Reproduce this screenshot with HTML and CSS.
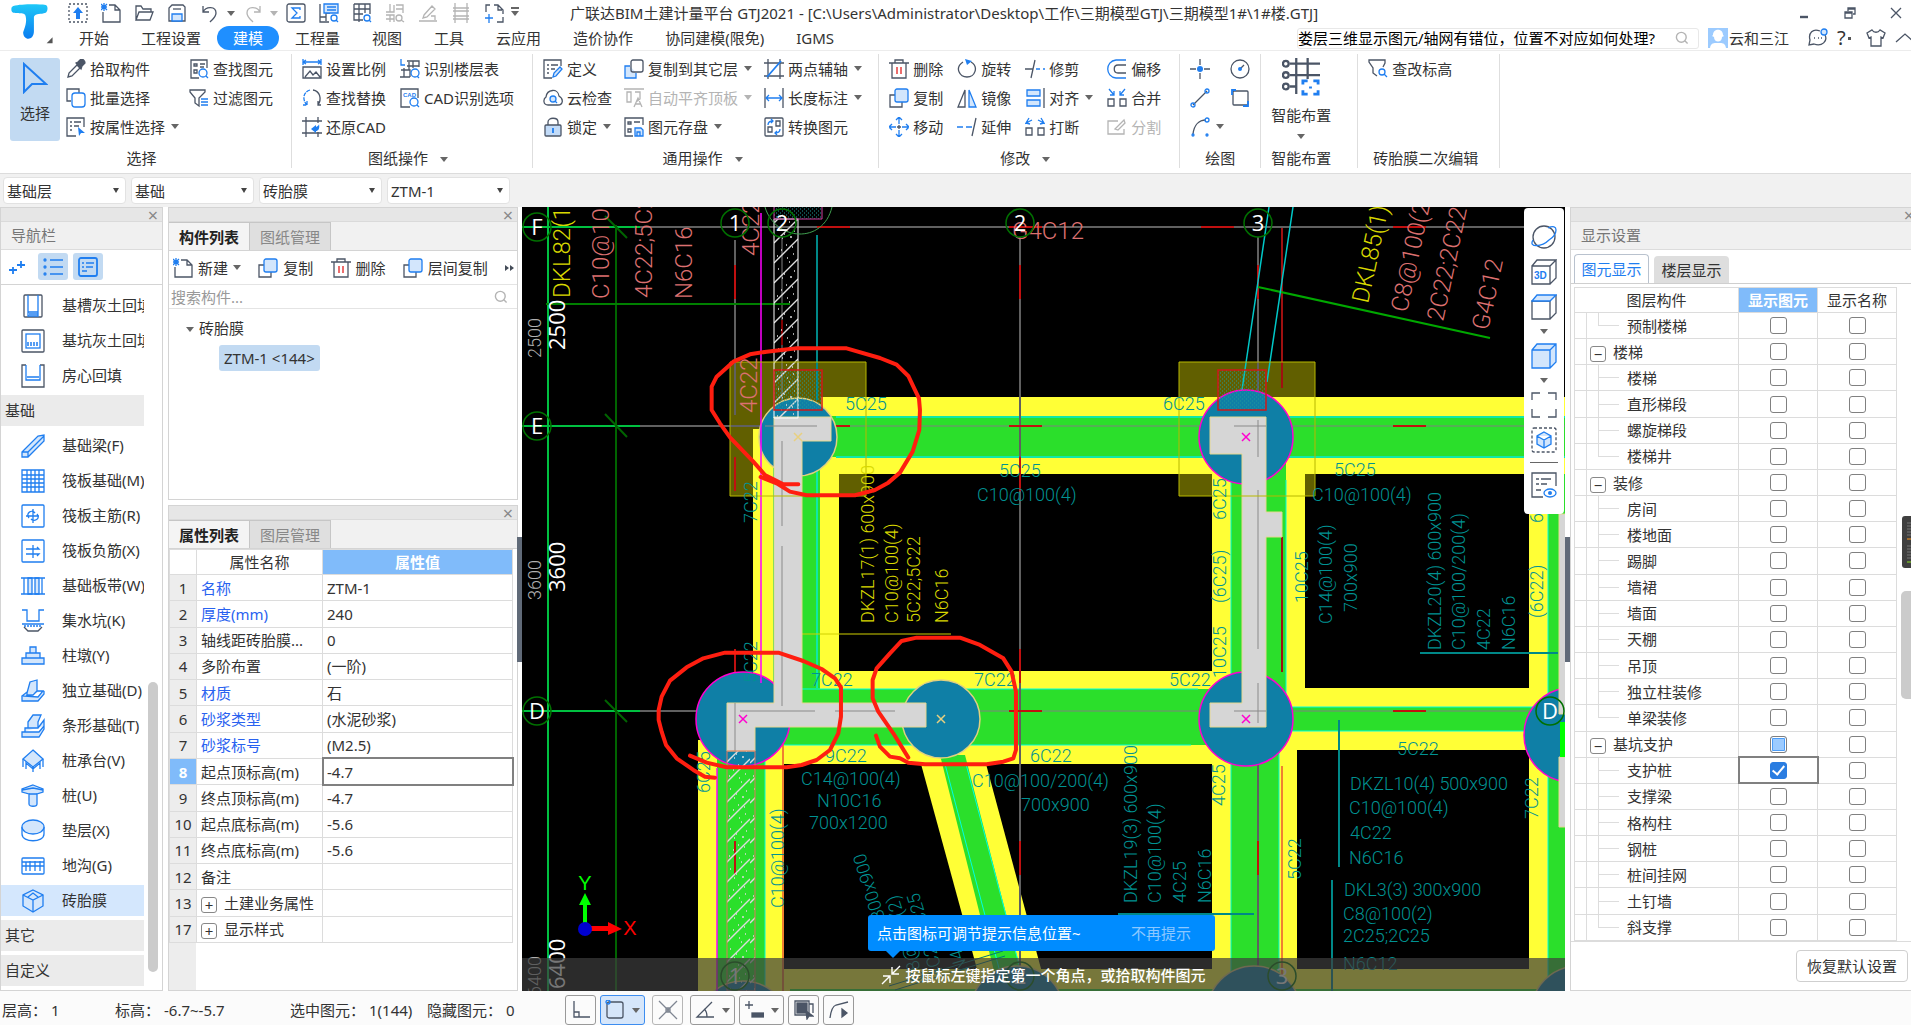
FILE: index.html
```
<!DOCTYPE html>
<html lang="zh-CN">
<head>
	<meta charset="UTF-8">
	<meta name="viewport" content="width=device-width, initial-scale=1">
	<title>广联达BIM土建计量平台 GTJ2021</title>
	<link rel="stylesheet" href="styles.css">
</head>
<body>
	<!-- icon sprite -->
	<svg class="sprite" aria-hidden="true">
		<symbol id="i-up" viewBox="0 0 20 20"><rect x="1" y="1" width="18" height="18" stroke-dasharray="2 2"/><path class="solid" d="M10 4l5 6h-3v6H8v-6H5z"/></symbol>
		<symbol id="i-new" viewBox="0 0 20 20"><path d="M8 2h6l5 5v12H2V9M14 2v5h5"/><path class="b" d="M0 1l6 6M6 1L0 7M3 0v8M0 4h6"/></symbol>
		<symbol id="i-open" viewBox="0 0 20 20"><path d="M2 17V3h5l2 3h8v3M2 17L5 9h14l-3 8z"/></symbol>
		<symbol id="i-save" viewBox="0 0 20 20"><path d="M2 18V5l3-3h11l2 2v14z"/><path class="bf" d="M5 18v-7h10v7z"/><path d="M6 6h8"/></symbol>
		<symbol id="i-undo" viewBox="0 0 20 20"><path d="M3 3v6h6M3 9c3-6 13-6 13 1 0 4-3 6-6 9"/></symbol>
		<symbol id="i-redo" viewBox="0 0 20 20"><path class="g" d="M17 3v6h-6M17 9C14 3 4 3 4 10c0 4 3 6 6 9"/></symbol>
		<symbol id="i-sum" viewBox="0 0 20 20"><rect x="1" y="1" width="18" height="18" rx="2"/><path class="b" d="M14 7V5H6l5 5-5 5h8v-2"/></symbol>
		<symbol id="i-find" viewBox="0 0 20 20"><path d="M1 1v18h9M1 14h6v4M7 14v-4h4"/><path class="bf" d="M5 1h14v9H5z"/><path class="b" d="M8 4h9M8 7h9M17 17l2 2"/><circle class="b" cx="15" cy="15" r="3"/></symbol>
		<symbol id="i-grid" viewBox="0 0 20 20"><path d="M2 1h16v10M2 1v16h9M2 6h16M2 11h9M7 1v18M13 1v9"/><circle class="b" cx="15" cy="15" r="3"/><path class="b" d="M17 17l2 2"/></symbol>
		<symbol id="i-gfind" viewBox="0 0 20 20"><path class="g" d="M1 9h8V2M5 1v8M11 2h7v8M11 6h7M1 12h8v7M5 12v7M1 16h8"/><circle class="g" cx="14" cy="15" r="3"/><path class="g" d="M16 17l3 2"/></symbol>
		<symbol id="i-pen" viewBox="0 0 20 20"><path class="g" d="M6 12l8-9 3 3-8 8-4 1zM1 18h18M13 13h4v4"/></symbol>
		<symbol id="i-ladder" viewBox="0 0 20 20"><path class="g" d="M4 0v20M16 0v20M2 5h16M2 8h16M2 13h16M2 16h16"/></symbol>
		<symbol id="i-page" viewBox="0 0 20 20"><path d="M2 9V2h4M10 2h4l5 5v4M19 14v5h-6M14 2v5h4"/><path class="b" d="M5 11v9M1 15h8"/></symbol>
		<symbol id="i-pick" viewBox="0 0 20 20"><path d="M2 18l1-4 8-8 3 3-8 8z"/><path class="dark" d="M10 4l2-1 3-3c2 0 4 2 4 4l-3 3-1 3z"/></symbol>
		<symbol id="i-batch" viewBox="0 0 20 20"><path d="M5 13H1V1h12v4"/><rect class="b" x="6" y="5" width="13" height="14" rx="3"/></symbol>
		<symbol id="i-prop" viewBox="0 0 20 20"><path d="M10 19H1V1h17v9M4 5h2M8 5h7M4 9h2M8 9h5M4 13h2"/><path class="solid" d="M12 10l7 6-4 0-2 3z"/></symbol>
		<symbol id="i-findel" viewBox="0 0 20 20"><path d="M10 19H2V1h16v8M5 5h3v2H5zM5 11h3v3H5zM11 5h5M11 8h4"/><circle class="b" cx="14" cy="14" r="4"/><path class="b" d="M17 17l2 2"/></symbol>
		<symbol id="i-filter" viewBox="0 0 20 20"><path d="M1 2h15v2l-6 6v8l-4-3v-5L1 4z"/><path class="b" d="M12 11h7M12 14h7M12 17h7"/></symbol>
		<symbol id="i-scale" viewBox="0 0 20 20"><path class="b" d="M1 3h18M1 0v6M19 0v6M16 1l3 2-3 2M4 1L1 3l3 2"/><path d="M1 8h18v11H1zM3 18l5-6 3 4 3-3 4 5"/></symbol>
		<symbol id="i-floor" viewBox="0 0 20 20"><path class="b" d="M1 0v6h4"/><path d="M7 2h12v6M13 2v7M7 7h12M1 11h9v7M4 9v9M0 18h10M9 3v8"/><circle class="b" cx="15" cy="14" r="4"/><path class="b" d="M17 17l2 2"/></symbol>
		<symbol id="i-swap" viewBox="0 0 20 20"><path class="b" d="M8 2C1 4 0 12 5 17M5 13v4H1" stroke-dasharray="4 1"/><path d="M11 2c7 1 9 9 5 15M16 13v4h3"/></symbol>
		<symbol id="i-cad" viewBox="0 0 20 20"><path d="M10 19H1V1h17v9"/><text class="tiny" x="3" y="9">CAD</text><circle class="b" cx="14" cy="14" r="4"/><path class="b" d="M17 17l2 2"/></symbol>
		<symbol id="i-restore" viewBox="0 0 20 20"><path d="M0 4h20M4 0v20M0 16h20M16 0v6M16 15v5"/><path class="solid" d="M9 12l5-4v2c3-1 3-3 3-3 1 5-1 7-3 7v2z"/></symbol>
		<symbol id="i-def" viewBox="0 0 20 20"><path d="M9 19H1V1h17v6M4 6h2M8 6h7M4 10h2M8 10h4M4 14h2"/><path class="bf" d="M10 18l1-4 6-6 2 2-6 7z"/></symbol>
		<symbol id="i-cloud" viewBox="0 0 20 20"><path d="M5 17c-5 0-5-6-2-8C4 1 15 0 16 8c5 3 4 9-1 9z"/><circle class="bf" cx="10" cy="11" r="3"/><path class="b" d="M12 13l2 2"/></symbol>
		<symbol id="i-lock" viewBox="0 0 20 20"><path d="M5 8V5c0-5 10-5 10 0v3"/><rect class="lf" x="2" y="8" width="16" height="11" rx="1"/><path class="b2" d="M10 11v5"/></symbol>
		<symbol id="i-copyto" viewBox="0 0 20 20"><path class="bf" d="M6 7H1v12h11v-5"/><rect x="7" y="1" width="12" height="12" rx="2"/></symbol>
		<symbol id="i-align" viewBox="0 0 20 20"><path class="g" d="M0 1h20M3 4h4v10H3zM11 4h5v7l-4 3M10 19l4-9 4 9M11 16h6"/></symbol>
		<symbol id="i-disk" viewBox="0 0 20 20"><path d="M9 19H1V1h18v7M4 5h3v2H4zM4 12h3v3H4zM10 5h6"/><path class="bf" d="M11 11h6l2 2v6h-8z"/><path class="b" d="M13 19v-4h3v4"/></symbol>
		<symbol id="i-two" viewBox="0 0 20 20"><path d="M0 4h20M4 0v20M0 17h20M16 0v20"/><path class="b2" d="M3 18L17 2"/></symbol>
		<symbol id="i-len" viewBox="0 0 20 20"><path d="M1 0v20M19 0v20"/><path class="b" d="M2 10h16M5 7l-3 3 3 3M15 7l3 3-3 3"/></symbol>
		<symbol id="i-conv" viewBox="0 0 20 20"><rect x="1" y="1" width="18" height="18" rx="1"/><path d="M4 10h4v5H4zM12 4h4v5h-4z"/><path class="b" d="M4 8c0-3 2-4 5-4M7 2l2 2-2 2M16 12c0 3-2 4-5 4M13 14l-2 2 2 2"/></symbol>
		<symbol id="i-del" viewBox="0 0 20 20"><path d="M0 4h20M6 4V1h8v3M3 4v15h14V4"/><path class="r" d="M8 8v7M12 8v7"/></symbol>
		<symbol id="i-copy" viewBox="0 0 20 20"><path d="M7 7H1v12h12v-5"/><rect class="bf" x="6" y="1" width="13" height="13" rx="2"/></symbol>
		<symbol id="i-move" viewBox="0 0 20 20"><path class="b" d="M10 7V1M7 3l3-3 3 3M10 13v6M7 17l3 3 3-3M7 10H1M3 7l-3 3 3 3M13 10h6M17 7l3 3-3 3"/><path d="M10 8v4M8 10h4"/></symbol>
		<symbol id="i-rot" viewBox="0 0 20 20"><path d="M6 3c-9 6-3 15 4 15 8 0 12-10 4-15"/><path class="solid" d="M8 0l7 2-5 4z"/></symbol>
		<symbol id="i-mir" viewBox="0 0 20 20"><path d="M8 2v17H1z"/><path class="bf" d="M12 2v17h7z"/></symbol>
		<symbol id="i-ext" viewBox="0 0 20 20"><path d="M19 1l-4 18"/><path class="b" d="M0 10h6M9 10h6"/></symbol>
		<symbol id="i-trim" viewBox="0 0 20 20"><path d="M10 1L6 19M0 10h8"/><path class="b" d="M11 10h4M18 10h2"/></symbol>
		<symbol id="i-al" viewBox="0 0 20 20"><path d="M19 0v20"/><path class="bf" d="M2 2h13v6H2zM2 12h13v6H2z"/></symbol>
		<symbol id="i-brk" viewBox="0 0 20 20"><path d="M1 11h6v7H1zM13 11h6v7h-6z"/><path class="b" d="M7 3L1 6l3-5M1 6l4 1M13 3l6 3-3-5M19 6l-4 1"/></symbol>
		<symbol id="i-off" viewBox="0 0 20 20"><path class="b" d="M19 1H9C-2 2-2 18 9 19h10"/><path d="M19 6h-8c-5 0-5 8 0 8h8"/></symbol>
		<symbol id="i-merge" viewBox="0 0 20 20"><path d="M1 11h6v7H1zM13 11h6v7h-6z"/><path class="b" d="M2 1l5 6M7 3v4H3M18 1l-5 6M13 3v4h4"/></symbol>
		<symbol id="i-split" viewBox="0 0 20 20"><path class="g" d="M11 4H1v13h16v-5M8 12l9-9 1 3-7 7z"/></symbol>
		<symbol id="i-pt" viewBox="0 0 20 20"><path d="M10 0v6M10 14v6M0 10h6M14 10h6"/><circle class="solid" cx="10" cy="10" r="3"/></symbol>
		<symbol id="i-cir" viewBox="0 0 20 20"><circle cx="10" cy="10" r="9"/><path d="M10 10l4-4"/><circle class="solid" cx="10" cy="10" r="2"/></symbol>
		<symbol id="i-line" viewBox="0 0 20 20"><path d="M3 17L17 3"/><circle class="b" cx="3" cy="17" r="2"/><circle class="b" cx="17" cy="3" r="2"/></symbol>
		<symbol id="i-rect" viewBox="0 0 20 20"><rect x="3" y="3" width="15" height="14" rx="1"/><path class="b2" d="M2 7V2h4M13 18h5v-5"/></symbol>
		<symbol id="i-arc" viewBox="0 0 20 20"><path d="M3 17C4 8 9 3 16 3"/><circle class="b" cx="3" cy="18" r="1"/><circle class="b" cx="17" cy="3" r="2"/><circle class="b" cx="17" cy="18" r="1"/></symbol>
		<symbol id="i-smart" viewBox="0 0 40 40"><path class="d2" d="M8 6h32M8 18h32M8 30h7M15 0v38M27 0v22"/><circle class="d2" cx="4" cy="6" r="3"/><circle class="d2" cx="4" cy="18" r="3"/><circle class="d2" cx="4" cy="30" r="3"/><path class="b3" d="M22 28v-4h5M33 24h5v4M38 34v4h-5M27 38h-5v-4M30 30v2"/></symbol>
		<symbol id="i-fh" viewBox="0 0 20 20"><path d="M9 17l-4-3V9L1 3V1h16v3l-2 4"/><circle class="b" cx="14" cy="13" r="3"/><path class="b" d="M16 15l3 3"/></symbol>
		<symbol id="i-mag" viewBox="0 0 20 20"><circle class="g" cx="9" cy="9" r="7"/><path class="g" d="M14 14l4 4"/></symbol>
		<!-- component icons -->
		<symbol id="n-slot" viewBox="0 0 24 24"><rect x="3" y="1" width="18" height="22" rx="1"/><path class="b" d="M7 1v21h10V1M7 18h10M8 20h9" /></symbol>
		<symbol id="n-pit" viewBox="0 0 24 24"><rect x="1" y="1" width="22" height="22" rx="1"/><rect class="b" x="5" y="5" width="14" height="14"/><path class="b" d="M6 14h12M6 16h12" stroke-dasharray="2 1"/></symbol>
		<symbol id="n-room" viewBox="0 0 24 24"><path d="M5 1H1v22h22V1h-4"/><path class="b" d="M5 1v15h14V1M6 13h12" /></symbol>
		<symbol id="n-beam" viewBox="0 0 24 24"><path class="bf" d="M1 18L17 2l6-1v6L7 23H1zM1 18h6v5M7 18L23 2"/></symbol>
		<symbol id="n-raft" viewBox="0 0 24 24"><path class="b" d="M1 1h22v22H1zM1 6h22M1 10h22M1 14h22M1 18h22M6 1v22M10 1v22M14 1v22M18 1v22"/></symbol>
		<symbol id="n-main" viewBox="0 0 24 24"><rect class="b" x="1" y="1" width="22" height="22" rx="1"/><path class="b" d="M5 12h13M12 5v14M8 14c-4-5 3-9 6-5M16 10c4 5-3 8-6 5"/></symbol>
		<symbol id="n-neg" viewBox="0 0 24 24"><rect class="b" x="1" y="1" width="22" height="22" rx="1"/><path class="b" d="M5 10h13l-2-2M5 15h13l-2 2M12 6v13"/></symbol>
		<symbol id="n-strip" viewBox="0 0 24 24"><path class="bf" d="M7 4h4v16H7zM14 4h4v16h-4z"/><path class="b" d="M0 4h24M0 20h24M3 4v16M21 4v16"/></symbol>
		<symbol id="n-sump" viewBox="0 0 24 24"><path class="b" d="M1 1h5v11h12V1h5M1 15h22" /><path class="b" d="M3 17h18" stroke-dasharray="2 1"/><path d="M3 18l4 4h10l4-4"/></symbol>
		<symbol id="n-pier" viewBox="0 0 24 24"><path class="bf" d="M9 3h6v6H9zM5 9h14v5H5zM1 14h22v6H1z"/></symbol>
		<symbol id="n-iso" viewBox="0 0 24 24"><path class="bf" d="M6 14L9 3l7-2v11l-4 4H6zM1 17l5-4v3h6l4-4h6l-5 6zM1 17v5h16l6-7v-3"/></symbol>
		<symbol id="n-stripf" viewBox="0 0 24 24"><path class="bf" d="M7 8l5-7h8l-3 7v6H7zM4 14h13l6-8v9l-5 8H1v-5h3zM1 18h17l5-6"/></symbol>
		<symbol id="n-cap" viewBox="0 0 24 24"><path class="bf" d="M12 1l10 9-10 8L2 10z"/><path class="b" d="M2 10v8M22 10v8M12 18v5M5 20v-6l7 6 7-6v6"/></symbol>
		<symbol id="n-pile" viewBox="0 0 24 24"><path class="bf" d="M12 1l10 4v3l-6 2v10c0 3-8 3-8 0V10L1 8V5z"/><path class="b" d="M1 6l11-2 10 2M8 10h8"/></symbol>
		<symbol id="n-cush" viewBox="0 0 24 24"><path class="b" d="M1 8v7c0 9 22 9 22 0V8"/><ellipse class="bf" cx="12" cy="8" rx="11" ry="7"/></symbol>
		<symbol id="n-ditch" viewBox="0 0 24 24"><rect class="b" x="1" y="4" width="22" height="16" rx="1"/><path class="b" d="M1 12h22M5 8v9M9 7v10M14 7v10M19 7v10M1 8h22"/></symbol>
		<symbol id="n-mold" viewBox="0 0 24 24"><path class="bf" d="M12 1l10 5v11l-10 6-10-6V6z"/><path class="b" d="M2 6l10 5 10-5M12 11v12M7 8l5-4 5 4"/></symbol>
		<symbol id="v-orbit" viewBox="0 0 26 26"><circle cx="13" cy="13" r="11"/><path class="b" d="M2 16c-5 8 9 7 16 0C27 10 28-1 17 4"/></symbol>
		<symbol id="v-cube" viewBox="0 0 26 26"><path d="M1 7h18v18H1zM1 7l5-6h19l-6 6M25 1v18l-6 6"/></symbol>
		<symbol id="v-top" viewBox="0 0 26 26"><path d="M1 7h18v18H1zM25 1v18l-6 6"/><path class="bf" d="M1 7l5-6h19l-6 6z"/></symbol>
		<symbol id="v-solid" viewBox="0 0 26 26"><path class="bf" d="M1 7l5-6h19v18l-6 6H1zM1 7h18v18M19 7l6-6"/></symbol>
		<symbol id="v-full" viewBox="0 0 26 26"><path d="M1 8V1h8M17 1h8v7M25 17v8h-8M9 25H1v-8"/></symbol>
		<symbol id="v-box" viewBox="0 0 26 26"><rect x="1" y="1" width="24" height="24" rx="2" stroke-dasharray="3 2"/><path class="bf" d="M13 5l7 4v8l-7 4-7-4V9zM6 9l7 4 7-4M13 13v8"/></symbol>
		<symbol id="v-list" viewBox="0 0 26 26"><path d="M12 25H1V1h24v13M5 7h3M10 7h10M5 12h3M10 12h6M5 18h5"/><ellipse class="b" cx="19" cy="21" rx="6" ry="4"/><circle class="solid" cx="19" cy="21" r="2"/></symbol>
	</svg>

	<header class="top">
		<div class="logo">
			<svg viewBox="0 0 60 51">
				<defs><linearGradient id="lg" x1="0" y1="0" x2="0" y2="1"><stop offset="0" stop-color="#1ec8f8"/><stop offset="1" stop-color="#0a7cf0"/></linearGradient></defs>
				<path fill="url(#lg)" d="M13 6c8-2 25-2 33-1 3 1 2 7 0 8-5 2-10 0-12 4v15c0 10-11 10-11 1 3-8 4-13 2-18-3-3-14 1-14-5 0-2 0-3 2-4z"/>
				<path fill="#555" d="M53 38v6h-6z"/>
			</svg>
		</div>
		<div class="top-main">
			<div class="titlebar">
				<div class="quick">
					<button aria-label="升级"><svg class="ic"><use href="#i-up"/></svg></button>
					<button aria-label="新建工程"><svg class="ic"><use href="#i-new"/></svg></button>
					<button aria-label="打开"><svg class="ic"><use href="#i-open"/></svg></button>
					<button aria-label="保存"><svg class="ic"><use href="#i-save"/></svg></button>
					<button aria-label="撤销"><svg class="ic"><use href="#i-undo"/></svg></button>
					<button class="drop" aria-label="撤销列表"><i class="tri"></i></button>
					<button aria-label="恢复"><svg class="ic"><use href="#i-redo"/></svg></button>
					<button class="drop" aria-label="恢复列表"><i class="tri dim"></i></button>
					<button aria-label="汇总计算"><svg class="ic"><use href="#i-sum"/></svg></button>
					<button aria-label="查看工程量"><svg class="ic"><use href="#i-find"/></svg></button>
					<button aria-label="查看报表"><svg class="ic"><use href="#i-grid"/></svg></button>
					<button aria-label="查看计算式" disabled><svg class="ic"><use href="#i-gfind"/></svg></button>
					<button aria-label="编辑" disabled><svg class="ic"><use href="#i-pen"/></svg></button>
					<button aria-label="钢筋" disabled><svg class="ic"><use href="#i-ladder"/></svg></button>
					<button aria-label="导出"><svg class="ic"><use href="#i-page"/></svg></button>
					<button class="drop" aria-label="自定义快速访问"><i class="tri bar"></i></button>
				</div>
				<div class="title">广联达BIM土建计量平台 GTJ2021 - [C:\Users\Administrator\Desktop\工作\三期模型GTJ\三期模型1#\1#楼.GTJ]</div>
				<div class="win">
					<button aria-label="最小化"><svg class="ic" viewBox="0 0 20 20"><path class="d2" d="M6 14h8"/></svg></button>
					<button aria-label="还原"><svg class="ic" viewBox="0 0 20 20"><path d="M5 9h7v6H5zM8 8V5h7v6h-2M5 10h7M8 6h7"/></svg></button>
					<button aria-label="关闭"><svg class="ic" viewBox="0 0 20 20"><path d="M5 5l10 10M15 5L5 15"/></svg></button>
				</div>
			</div>
			<div class="menubar">
				<nav class="menu">
					<a href="#">开始</a><a href="#">工程设置</a><a href="#" class="on">建模</a><a href="#">工程量</a><a href="#">视图</a><a href="#">工具</a><a href="#">云应用</a><a href="#">造价协作</a><a href="#">协同建模(限免)</a><a href="#">IGMS</a>
				</nav>
				<div class="help">
					<div class="ask"><input type="text" aria-label="帮助搜索" value="娄层三维显示图元/轴网有错位，位置不对应如何处理?"><svg class="ic small"><use href="#i-mag"/></svg></div>
					<svg class="avatar" viewBox="0 0 20 20"><path fill="#9ccbff" d="M0 0h20v20H0z"/><path fill="#fff" d="M5 7c0-7 10-7 10 0l1 1-2 1c0 6-8 6-8 0L4 8zM2 20c1-6 5-5 8-5s7-1 8 5z"/></svg>
					<a href="#" class="user">云和三江</a>
					<button aria-label="消息"><svg class="ic" viewBox="0 0 20 20"><path d="M12 3C5 0 0 5 2 12l-1 5 5-1c8 3 14-3 11-9M6 10h1M10 10h1M13 10h1"/><circle class="bf" cx="16" cy="4" r="3"/></svg></button>
					<button class="q" aria-label="帮助">?<i class="dot"></i></button>
					<button aria-label="皮肤"><svg class="ic" viewBox="0 0 20 20"><path d="M6 2c2 3 6 3 8 0l5 3-2 5-2-1v9H5V9l-2 1-2-5z"/></svg></button>
					<button aria-label="收起功能区"><svg class="ic" viewBox="0 0 20 20"><path d="M1 14l9-8 9 8"/></svg></button>
				</div>
			</div>
		</div>
	</header>

	<section class="ribbon">
		<div class="group g-select">
			<div class="tools">
				<button class="big on"><svg class="arrow" viewBox="0 0 26 32"><path d="M2 2v28l8-8h14z"/></svg>选择</button>
				<div class="cols">
					<button><svg class="ic"><use href="#i-pick"/></svg>拾取构件</button>
					<button><svg class="ic"><use href="#i-batch"/></svg>批量选择</button>
					<button><svg class="ic"><use href="#i-prop"/></svg>按属性选择<i class="tri"></i></button>
					<button><svg class="ic"><use href="#i-findel"/></svg>查找图元</button>
					<button><svg class="ic"><use href="#i-filter"/></svg>过滤图元</button>
				</div>
			</div>
			<div class="name">选择</div>
		</div>
		<div class="group g-paper">
			<div class="tools"><div class="cols">
				<button><svg class="ic"><use href="#i-scale"/></svg>设置比例</button>
				<button><svg class="ic"><use href="#i-swap"/></svg>查找替换</button>
				<button><svg class="ic"><use href="#i-restore"/></svg>还原CAD</button>
				<button><svg class="ic"><use href="#i-floor"/></svg>识别楼层表</button>
				<button><svg class="ic"><use href="#i-cad"/></svg>CAD识别选项</button>
			</div></div>
			<div class="name">图纸操作<i class="tri"></i></div>
		</div>
		<div class="group g-common">
			<div class="tools"><div class="cols">
				<button><svg class="ic"><use href="#i-def"/></svg>定义</button>
				<button><svg class="ic"><use href="#i-cloud"/></svg>云检查</button>
				<button><svg class="ic"><use href="#i-lock"/></svg>锁定<i class="tri"></i></button>
				<button><svg class="ic"><use href="#i-copyto"/></svg>复制到其它层<i class="tri"></i></button>
				<button disabled><svg class="ic"><use href="#i-align"/></svg>自动平齐顶板<i class="tri dim"></i></button>
				<button><svg class="ic"><use href="#i-disk"/></svg>图元存盘<i class="tri"></i></button>
				<button><svg class="ic"><use href="#i-two"/></svg>两点辅轴<i class="tri"></i></button>
				<button><svg class="ic"><use href="#i-len"/></svg>长度标注<i class="tri"></i></button>
				<button><svg class="ic"><use href="#i-conv"/></svg>转换图元</button>
			</div></div>
			<div class="name">通用操作<i class="tri"></i></div>
		</div>
		<div class="group g-edit">
			<div class="tools"><div class="cols">
				<button><svg class="ic"><use href="#i-del"/></svg>删除</button>
				<button><svg class="ic"><use href="#i-copy"/></svg>复制</button>
				<button><svg class="ic"><use href="#i-move"/></svg>移动</button>
				<button><svg class="ic"><use href="#i-rot"/></svg>旋转</button>
				<button><svg class="ic"><use href="#i-mir"/></svg>镜像</button>
				<button><svg class="ic"><use href="#i-ext"/></svg>延伸</button>
				<button><svg class="ic"><use href="#i-trim"/></svg>修剪</button>
				<button><svg class="ic"><use href="#i-al"/></svg>对齐<i class="tri"></i></button>
				<button><svg class="ic"><use href="#i-brk"/></svg>打断</button>
				<button><svg class="ic"><use href="#i-off"/></svg>偏移</button>
				<button><svg class="ic"><use href="#i-merge"/></svg>合并</button>
				<button disabled><svg class="ic"><use href="#i-split"/></svg>分割</button>
			</div></div>
			<div class="name">修改<i class="tri"></i></div>
		</div>
		<div class="group g-draw">
			<div class="tools"><div class="cols">
				<button aria-label="点"><svg class="ic"><use href="#i-pt"/></svg></button>
				<button aria-label="直线"><svg class="ic"><use href="#i-line"/></svg></button>
				<button aria-label="弧线"><svg class="ic"><use href="#i-arc"/></svg><i class="tri"></i></button>
				<button aria-label="圆"><svg class="ic"><use href="#i-cir"/></svg></button>
				<button aria-label="矩形"><svg class="ic"><use href="#i-rect"/></svg></button>
			</div></div>
			<div class="name">绘图</div>
		</div>
		<div class="group g-smart">
			<div class="tools"><button class="big"><svg class="ic smart"><use href="#i-smart"/></svg>智能布置<i class="tri"></i></button></div>
			<div class="name">智能布置</div>
		</div>
		<div class="group g-second">
			<div class="tools"><div class="cols"><button><svg class="ic"><use href="#i-fh"/></svg>查改标高</button></div></div>
			<div class="name">砖胎膜二次编辑</div>
		</div>
	</section>

	<div class="combos">
		<div class="combo"><select aria-label="楼层"><option>基础层</option></select></div>
		<div class="combo"><select aria-label="分类"><option>基础</option></select></div>
		<div class="combo"><select aria-label="构件类型"><option>砖胎膜</option></select></div>
		<div class="combo"><select aria-label="构件"><option>ZTM-1</option></select></div>
	</div>

	<main class="work">
		<aside class="panel nav">
			<div class="strip"><button aria-label="关闭导航栏"></button></div>
			<h2>导航栏</h2>
			<div class="navtools">
				<button aria-label="添加"><svg class="ic" viewBox="0 0 20 20"><path class="b2" d="M5 10v7M1 13h8M13 4v7M9 8h8"/></svg></button>
				<button class="on" aria-label="列表"><svg class="ic" viewBox="0 0 20 20"><path class="b" d="M7 3h13M7 10h13M7 17h13"/><circle class="b" cx="2" cy="3" r="1"/><circle class="b" cx="2" cy="10" r="1"/><circle class="b" cx="2" cy="17" r="1"/></svg></button>
				<button class="on" aria-label="图标"><svg class="ic" viewBox="0 0 20 20"><rect class="b2" x="1" y="1" width="18" height="18" rx="2"/><path class="b" d="M4 6h2M8 6h8M4 10h2M8 10h7M4 14h5"/></svg></button>
			</div>
			<div class="navbody">
				<ul>
					<li><a href="#"><svg class="ic"><use href="#n-slot"/></svg>基槽灰土回填</a></li>
					<li><a href="#"><svg class="ic"><use href="#n-pit"/></svg>基坑灰土回填</a></li>
					<li><a href="#"><svg class="ic"><use href="#n-room"/></svg>房心回填</a></li>
					<li class="cat">基础</li>
					<li><a href="#"><svg class="ic"><use href="#n-beam"/></svg>基础梁(F)</a></li>
					<li><a href="#"><svg class="ic"><use href="#n-raft"/></svg>筏板基础(M)</a></li>
					<li><a href="#"><svg class="ic"><use href="#n-main"/></svg>筏板主筋(R)</a></li>
					<li><a href="#"><svg class="ic"><use href="#n-neg"/></svg>筏板负筋(X)</a></li>
					<li><a href="#"><svg class="ic"><use href="#n-strip"/></svg>基础板带(W)</a></li>
					<li><a href="#"><svg class="ic"><use href="#n-sump"/></svg>集水坑(K)</a></li>
					<li><a href="#"><svg class="ic"><use href="#n-pier"/></svg>柱墩(Y)</a></li>
					<li><a href="#"><svg class="ic"><use href="#n-iso"/></svg>独立基础(D)</a></li>
					<li><a href="#"><svg class="ic"><use href="#n-stripf"/></svg>条形基础(T)</a></li>
					<li><a href="#"><svg class="ic"><use href="#n-cap"/></svg>桩承台(V)</a></li>
					<li><a href="#"><svg class="ic"><use href="#n-pile"/></svg>桩(U)</a></li>
					<li><a href="#"><svg class="ic"><use href="#n-cush"/></svg>垫层(X)</a></li>
					<li><a href="#"><svg class="ic"><use href="#n-ditch"/></svg>地沟(G)</a></li>
					<li class="on"><a href="#"><svg class="ic"><use href="#n-mold"/></svg>砖胎膜</a></li>
					<li class="cat">其它</li>
					<li class="cat">自定义</li>
				</ul>
				<div class="scroll"><i></i></div>
			</div>
		</aside>

		<div class="middle">
			<section class="panel list">
				<div class="strip"><button aria-label="关闭构件列表"></button></div>
				<div class="tabs"><button class="on">构件列表</button><button>图纸管理</button></div>
				<div class="listtools">
					<button><svg class="ic"><use href="#i-new"/></svg>新建<i class="tri"></i></button>
					<button><svg class="ic"><use href="#i-copy"/></svg>复制</button>
					<button><svg class="ic"><use href="#i-del"/></svg>删除</button>
					<button><svg class="ic"><use href="#i-copy"/></svg>层间复制</button>
					<button class="more" aria-label="更多"><svg viewBox="0 0 10 6"><path fill="#444c58" d="M0 0l4 3-4 3zM5 0l4 3-4 3z"/></svg></button>
				</div>
				<div class="search"><input type="text" aria-label="搜索构件" placeholder="搜索构件..."><svg class="ic small"><use href="#i-mag"/></svg></div>
				<ul class="tree">
					<li><i class="tri"></i>砖胎膜
						<ul><li><a href="#">ZTM-1 &lt;144&gt;</a></li></ul>
					</li>
				</ul>
			</section>
			<section class="panel props">
				<div class="strip"><button aria-label="关闭属性列表"></button></div>
				<div class="tabs"><button class="on">属性列表</button><button>图层管理</button></div>
				<div class="propbody">
					<table class="proptable">
						<colgroup><col class="c-no"><col class="c-key"><col></colgroup>
						<thead><tr><th class="blank"></th><th>属性名称</th><th class="hl">属性值</th></tr></thead>
						<tbody>
							<tr><th>1</th><td class="key">名称</td><td>ZTM-1</td></tr>
							<tr><th>2</th><td class="key">厚度(mm)</td><td>240</td></tr>
							<tr><th>3</th><td>轴线距砖胎膜...</td><td>0</td></tr>
							<tr><th>4</th><td>多阶布置</td><td>(一阶)</td></tr>
							<tr><th>5</th><td class="key">材质</td><td>石</td></tr>
							<tr><th>6</th><td class="key">砂浆类型</td><td>(水泥砂浆)</td></tr>
							<tr><th>7</th><td class="key">砂浆标号</td><td>(M2.5)</td></tr>
							<tr><th class="hl">8</th><td>起点顶标高(m)</td><td class="edit"><input type="text" aria-label="起点顶标高(m)" value="-4.7"></td></tr>
							<tr><th>9</th><td>终点顶标高(m)</td><td>-4.7</td></tr>
							<tr><th>10</th><td>起点底标高(m)</td><td>-5.6</td></tr>
							<tr><th>11</th><td>终点底标高(m)</td><td>-5.6</td></tr>
							<tr><th>12</th><td>备注</td><td></td></tr>
							<tr><th>13</th><td><button class="fold" aria-label="展开">+</button>土建业务属性</td><td></td></tr>
							<tr><th>17</th><td><button class="fold" aria-label="展开">+</button>显示样式</td><td></td></tr>
						</tbody>
					</table>
				</div>
			</section>
		</div>

		<div class="split"><i></i></div>

		<section class="canvas">
			<svg class="cad" viewBox="522 207 1043 784" preserveAspectRatio="xMidYMid slice">
				<defs>
					<pattern id="hatch" width="24" height="40" patternUnits="userSpaceOnUse" x="774" y="225">
						<path d="M0 18L24 -6M0 38L24 14M0 58L24 34" stroke="#ddd" stroke-width="1.4"/>
						<path d="M4 4h1M10 9h1M16 12h2M7 25h1M19 29h1M13 33h1M3 31h1M20 6h1M12 20h1M18 22h1M8 13h1M15 37h1" stroke="#ddd" stroke-width="1.4"/>
					</pattern>
					<pattern id="dots" width="4" height="4" patternUnits="userSpaceOnUse"><path d="M0 1h1M2 3h1" stroke="#1f9a9a"/></pattern>
				</defs>
				<rect x="522" y="207" width="1043" height="784" fill="#000"/>

				<!-- pile caps -->
				<g fill="#615f00"><path d="M730 362h136v134H730zM1179 362h136v134h-136z"/></g>

				<!-- beams, outer band -->
				<g fill="#ffff36">
					<path d="M821 397h744v77H839v197h373V474h93v214h224V474h36v277H1297v218h232V751h36v240H698V740h64l-9-9V429h68z" fill-rule="evenodd"/>
				</g>
				<g fill="#000">
					<path d="M839 474h373v197H839zM1305 474h224v214h-224zM783 764h429v205H783zM1297 750h232v219h-232z"/>
				</g>
				<path fill="#615f00" d="M839 474h27v22h-27zM1179 474h33v22h-33zM1305 474h10v22h-10z"/>
				<path fill="#ffff36" d="M921 764h65l61 227h-64z"/>
				<!-- beams, inner band -->
				<g fill="#2bdf2b">
					<path d="M830 416h735v41H830zM773 440h47v270h-47zM780 689h440v56H780zM1231 450h55v260h-55zM1231 745h48v246h-48zM1285 707h280v24h-280zM717 745h48v246h-48zM1548 474h17v517h-17zM940 755h25l61 236h-27zM790 989h775v2H790z"/>
				</g>
				<g stroke="#10e8a8" stroke-width="2"><path d="M836 417h729M836 457h729M817 470v218" /></g>
				<g stroke="#00ffe0" stroke-width="1"><path d="M768 689h430M771 745h420M1231 480v197M1286 480v220M1231 762v229M1279 750v241M1290 707h258M1290 731h258M1548 514v477M765 752v239M945 764l60 227M966 764l60 227"/></g>

				<!-- slab axis grid -->
				<g fill="none" stroke="#606060" stroke-width="2">
					<path d="M735 240v175M1020 237v754M1258 237v754M640 227h884M640 426h125M640 711h80"/>
				</g>
				<g stroke="#808080"><path d="M820 426h745M880 711h685M782 237v180"/></g>
				<g stroke="#c01010" stroke-width="2">
					<path stroke-dasharray="34 158" d="M735 265v726M1020 265v726M1258 265v726"/>
					<path stroke-dasharray="33 159" d="M817 227h700M817 426h748M1009 711h556"/>
					<path stroke="#a01010" d="M1282 228v160M1282 537v135"/><path stroke="#f08030" d="M1282 766v225M783 728v263"/>
					<path stroke="#800000" d="M782 320v25"/>
				</g>
				<g stroke="#00c040" stroke-width="2">
					<path d="M548 207v784M522 227h118M522 426h118M522 711h118"/>
					<path stroke="#006400" d="M616 225v766M605 216l22 22M605 414l22 23M605 700l22 22"/>
					<path stroke="#008000" d="M546 304h244"/>
					<path stroke="#00a800" d="M1258 287l232 51"/>
				</g>
				<g stroke="#00c8c8" stroke-width="1.5"><path d="M1269 207l-27 183M1293 207l-26 175"/><path stroke="#008888" stroke-width="2" d="M817 235v165M1420 653h138M1118 914h136M1339 720v147M1332 880v111"/></g>
				<path stroke="#d0d000" d="M802 634h149"/>
				<g stroke="#007878"><path d="M889 986l114-35M895 990l110-34"/></g>

				<!-- piles -->
				<g fill="#0f7fa6" stroke="#ff00d0" stroke-width="1.5">
					<circle cx="1246" cy="437" r="47"/><circle cx="1246" cy="719" r="47"/><circle cx="743" cy="719" r="47"/><circle cx="1571" cy="735" r="47"/>
				</g>
				<g fill="#0f7fa6" stroke="#e0d080" stroke-width="1.5">
					<circle cx="798" cy="437" r="39"/><circle cx="941" cy="719" r="39"/>
					<circle cx="743" cy="1028" r="47"/><circle cx="1017" cy="1013" r="47"/><circle cx="1254" cy="1013" r="47"/><circle cx="1578" cy="1013" r="47"/>
				</g>
				<path stroke="#ff00ff" stroke-width="1.5" d="M761 213v470M717 768v223"/>

				<!-- walls -->
				<g fill="#d6d6d6" stroke="#e6d890">
					<path d="M774 417h57v24h-29v262h124v24H755v24h-28v-48h47z"/>
					<path d="M1210 417h56v95h16v25h-16v190h-56v-24h32V454h-32z"/>
					<path d="M1559 514h10v200h-10zM1559 757h10v70h-10z"/>
				</g>
				<path fill="#00ff00" d="M1560 722h6v35h-6z"/>
				<path stroke="#8a8a8a" d="M765 426h52M1234 426h32M1234 711h32M735 703v48M740 711h75M835 711h60M782 441v85M782 546v160M1258 420v37M1258 490v159M1258 683v40" fill="none"/>
				<path fill="url(#hatch)" stroke="#fff" d="M774 219h24v199h-24z"/>
				<path fill="url(#hatch)" stroke="#e07860" d="M727 751h28v240h-28z"/>
				<path fill="url(#dots)" stroke="#d01818" stroke-width="1.5" d="M774 370h48v40h-48zM1218 370h48v40h-48z"/>
				<path fill="url(#dots)" stroke="#d040a0" d="M774 200h48v19h-48z"/>
				<path fill="none" stroke="#40a050" d="M765 207c10 34 58 38 67 0"/>
				<g fill="none" stroke="#b8b800"><path d="M730 362h136v134H730zM1179 362h136v134h-136z"/></g>
				<g fill="none" stroke="#ff00d0" stroke-width="1.5"><path d="M1242 433l8 8M1250 433l-8 8M1242 715l8 8M1250 715l-8 8M739 715l8 8M747 715l-8 8"/><path stroke="#e8d080" d="M794 433l8 8M802 433l-8 8M937 715l8 8M945 715l-8 8"/></g>

				<!-- rebar annotations -->
				<g class="cadtext teal">
					<text x="845" y="410">5C25</text><text x="999" y="477">5C25</text><text x="977" y="501">C10@100(4)</text>
					<text x="1163" y="410">6C25</text><text x="1334" y="476">5C25</text><text x="1312" y="501">C10@100(4)</text>
					<text x="811" y="686">7C22</text><text x="974" y="686">7C22</text><text x="1169" y="686">5C22</text>
					<text x="825" y="762">9C22</text><text x="801" y="785">C14@100(4)</text><text x="817" y="807">N10C16</text><text x="809" y="829">700x1200</text>
					<text x="1030" y="762">6C22</text><text x="972" y="787">C10@100/200(4)</text><text x="1021" y="811">700x900</text>
					<text x="1397" y="755">5C22</text>
					<text x="1350" y="790">DKZL10(4) 500x900</text><text x="1349" y="814">C10@100(4)</text><text x="1350" y="839">4C22</text><text x="1349" y="864">N6C16</text>
					<text x="1344" y="896">DKL3(3) 300x900</text><text x="1343" y="920">C8@100(2)</text><text x="1343" y="942">2C25;2C25</text><text x="1343" y="970">N6C12</text>
					<text transform="translate(757 523) rotate(-90)">7C22</text>
					<text transform="translate(757 683) rotate(-90)">5C22</text>
					<text transform="translate(710 793) rotate(-90)">6C25</text>
					<text transform="translate(784 908) rotate(-90)">C10@100(4)</text>
					<text transform="translate(1226 520) rotate(-90)">6C25</text>
					<text transform="translate(1226 603) rotate(-90)">(6C25)</text>
					<text transform="translate(1226 678) rotate(-90)">10C25</text>
					<text transform="translate(1308 603) rotate(-90)">10C25</text>
					<text transform="translate(1332 624) rotate(-90)">C14@100(4)</text>
					<text transform="translate(1357 612) rotate(-90)">700x900</text>
					<text transform="translate(1441 650) rotate(-90)">DKZL20(4) 600x900</text>
					<text transform="translate(1465 650) rotate(-90)">C10@100/200(4)</text>
					<text transform="translate(1490 650) rotate(-90)">4C22</text>
					<text transform="translate(1515 650) rotate(-90)">N6C16</text>
					<text transform="translate(1543 618) rotate(-90)">(6C22)</text>
					<text transform="translate(1543 523) rotate(-90)">6C22</text>
					<text transform="translate(1137 903) rotate(-90)">DKZL19(3) 600x900</text>
					<text transform="translate(1161 903) rotate(-90)">C10@100(4)</text>
					<text transform="translate(1186 903) rotate(-90)">4C25</text>
					<text transform="translate(1211 903) rotate(-90)">N6C16</text>
					<text transform="translate(1225 806) rotate(-90)">4C25</text>
					<text transform="translate(1301 880) rotate(-90)">5C22</text>
					<text transform="translate(1538 819) rotate(-90)">7C22</text>
					<text transform="translate(885 918) rotate(-107)">800x900</text>
					<text transform="translate(924 980) rotate(-107)">C8@100(2)</text>
					<text transform="translate(944 975) rotate(-107)">4C25;4C25</text>
					<text transform="translate(968 970) rotate(-107)">N4C12</text>
				</g>
				<g class="cadtext yellow">
					<text transform="translate(874 623) rotate(-90)">DKZL17(1) 600x900</text>
					<text transform="translate(898 623) rotate(-90)">C10@100(4)</text>
					<text transform="translate(920 623) rotate(-90)">5C22;5C22</text>
					<text transform="translate(948 623) rotate(-90)">N6C16</text>
				</g>
				<g class="cadtext large yellow">
					<text transform="translate(570 298) rotate(-90)">DKL82(1)</text>
					<text transform="translate(1368 304) rotate(-78)">DKL85(1)</text>
				</g>
				<g class="cadtext large pink">
					<text transform="translate(609 299) rotate(-90)">C10@100(4)</text>
					<text transform="translate(652 298) rotate(-90)">4C22;5C22</text>
					<text transform="translate(692 299) rotate(-90)">N6C16</text>
					<text transform="translate(759 256) rotate(-90)">4C22</text>
					<text transform="translate(757 413) rotate(-90)">4C22</text>
					<text transform="translate(1407 313) rotate(-78)">C8@100(2)</text>
					<text transform="translate(1443 322) rotate(-78)">2C22;2C22</text>
					<text transform="translate(1488 331) rotate(-78)">G4C12</text>
					<text x="1012" y="239">G4C12</text>
				</g>
				<g class="cadtext dim">
					<text transform="translate(541 358) rotate(-90)">2500</text>
					<text transform="translate(541 600) rotate(-90)">3600</text>
					<text transform="translate(541 996) rotate(-90)">6400</text>
				</g>
				<g class="axis">
					<text transform="translate(565 350) rotate(-90)">2500</text>
					<text transform="translate(565 592) rotate(-90)">3600</text>
					<text transform="translate(565 989) rotate(-90)">6400</text>
				</g>

				<!-- axis bubbles -->
				<g fill="none" stroke="#007000" stroke-width="1.5">
					<circle cx="537" cy="227" r="14"/><circle cx="537" cy="426" r="14"/><circle cx="537" cy="711" r="14"/><circle cx="735" cy="223" r="14"/><circle cx="782" cy="223" r="14"/><circle cx="1020" cy="223" r="14"/><circle cx="1258" cy="223" r="14"/><circle cx="1550" cy="711" r="14"/><circle cx="735" cy="976" r="14"/><circle cx="1020" cy="976" r="14"/><circle cx="1282" cy="976" r="14"/>
				</g>
				<g class="axis mid">
					<text x="537" y="235">F</text><text x="537" y="434">E</text><text x="537" y="719">D</text><text x="735" y="231">1</text><text x="782" y="231">2</text><text x="1020" y="231">2</text><text x="1258" y="231">3</text><text x="1550" y="719">D</text><text x="735" y="984">1</text><text x="1020" y="984">2</text><text x="1282" y="984">3</text>
				</g>

				<!-- ucs -->
				<path fill="#00ff00" d="M583 925v-20h-4l6-12 6 12h-4v20z"/>
				<path fill="#ff0000" d="M590 926h18v-4l14 7-14 6v-4h-18z"/>
				<circle cx="585" cy="929" r="7" fill="#0000d0"/>
				<text class="ucs" x="585" y="890" fill="#00ff00">Y</text><text class="ucs" x="630" y="935" fill="#ff0000">X</text>

				<!-- freehand marks -->
				<g fill="none" stroke="#ff1e10" stroke-width="12" stroke-linejoin="round" stroke-linecap="round">
					<path transform="translate(520 200) scale(.3333)" d="M722 831L770 850 810 875 860 886H1005L1065 870 1105 848 1140 818 1178 755 1198 690 1200 630 1197 595 1165 528 1130 494 1080 474 980 445H830L740 455 690 463 640 485 590 530 575 560V630L600 670 630 712 700 785 735 825 790 853H835"/>
					<path transform="translate(520 600) scale(.3333)" d="M510 467L560 488 620 502H800L845 495 890 480 930 450 955 400 963 350V262L945 235 905 207 850 183 775 158H615L550 175 500 202 450 242 425 290 416 330V360L425 395 438 435 470 475 520 510 555 530 585 533M1068 407L1080 440 1110 470 1140 475 1165 488 1215 493H1400L1450 485 1480 475 1488 450V275L1475 215 1450 175 1380 135 1320 113H1190L1145 123 1110 160 1070 205 1058 240V295L1075 335 1120 400 1165 473"/>
				</g>
			</svg>
			<div class="viewbar">
				<button aria-label="动态观察"><svg class="ic"><use href="#v-orbit"/></svg></button>
				<button aria-label="三维"><svg class="ic"><use href="#v-cube"/><text class="t3d" x="3" y="20">3D</text></svg></button>
				<button aria-label="俯视"><svg class="ic"><use href="#v-top"/></svg></button>
				<i class="tri"></i>
				<button aria-label="实体"><svg class="ic"><use href="#v-solid"/></svg></button>
				<i class="tri"></i>
				<button aria-label="全屏"><svg class="ic"><use href="#v-full"/></svg></button>
				<button aria-label="局部三维"><svg class="ic"><use href="#v-box"/></svg></button>
				<hr>
				<button aria-label="显示设置"><svg class="ic"><use href="#v-list"/></svg></button>
			</div>
			<div class="tip"><span>点击图标可调节提示信息位置~</span><button>不再提示</button></div>
			<div class="prompt"><svg viewBox="0 0 20 20"><path d="M19 1l-8 8M11 2v7h7M1 19l8-8M2 11h7v7"/></svg>按鼠标左键指定第一个角点，或拾取构件图元</div>
		</section>

		<div class="split"><i></i></div>

		<aside class="panel display">
			<div class="strip"><button aria-label="关闭显示设置"></button></div>
			<h2>显示设置</h2>
			<div class="pills"><button class="on">图元显示</button><button>楼层显示</button></div>
			<div class="layers">
				<table>
					<colgroup><col><col class="c-chk"><col class="c-chk"></colgroup>
					<thead><tr><th>图层构件</th><th class="hl">显示图元</th><th>显示名称</th></tr></thead>
					<tbody>
						<tr><td class="leaf last">预制楼梯</td><td><input type="checkbox" aria-label="预制楼梯 图元"></td><td><input type="checkbox" aria-label="预制楼梯 名称"></td></tr>
						<tr><td class="node"><button class="fold" aria-label="折叠">−</button>楼梯</td><td><input type="checkbox" aria-label="楼梯组 图元"></td><td><input type="checkbox" aria-label="楼梯组 名称"></td></tr>
						<tr><td class="leaf">楼梯</td><td><input type="checkbox" aria-label="楼梯 图元"></td><td><input type="checkbox" aria-label="楼梯 名称"></td></tr>
						<tr><td class="leaf">直形梯段</td><td><input type="checkbox" aria-label="直形梯段 图元"></td><td><input type="checkbox" aria-label="直形梯段 名称"></td></tr>
						<tr><td class="leaf">螺旋梯段</td><td><input type="checkbox" aria-label="螺旋梯段 图元"></td><td><input type="checkbox" aria-label="螺旋梯段 名称"></td></tr>
						<tr><td class="leaf last">楼梯井</td><td><input type="checkbox" aria-label="楼梯井 图元"></td><td><input type="checkbox" aria-label="楼梯井 名称"></td></tr>
						<tr><td class="node"><button class="fold" aria-label="折叠">−</button>装修</td><td><input type="checkbox" aria-label="装修 图元"></td><td><input type="checkbox" aria-label="装修 名称"></td></tr>
						<tr><td class="leaf">房间</td><td><input type="checkbox" aria-label="房间 图元"></td><td><input type="checkbox" aria-label="房间 名称"></td></tr>
						<tr><td class="leaf">楼地面</td><td><input type="checkbox" aria-label="楼地面 图元"></td><td><input type="checkbox" aria-label="楼地面 名称"></td></tr>
						<tr><td class="leaf">踢脚</td><td><input type="checkbox" aria-label="踢脚 图元"></td><td><input type="checkbox" aria-label="踢脚 名称"></td></tr>
						<tr><td class="leaf">墙裙</td><td><input type="checkbox" aria-label="墙裙 图元"></td><td><input type="checkbox" aria-label="墙裙 名称"></td></tr>
						<tr><td class="leaf">墙面</td><td><input type="checkbox" aria-label="墙面 图元"></td><td><input type="checkbox" aria-label="墙面 名称"></td></tr>
						<tr><td class="leaf">天棚</td><td><input type="checkbox" aria-label="天棚 图元"></td><td><input type="checkbox" aria-label="天棚 名称"></td></tr>
						<tr><td class="leaf">吊顶</td><td><input type="checkbox" aria-label="吊顶 图元"></td><td><input type="checkbox" aria-label="吊顶 名称"></td></tr>
						<tr><td class="leaf">独立柱装修</td><td><input type="checkbox" aria-label="独立柱装修 图元"></td><td><input type="checkbox" aria-label="独立柱装修 名称"></td></tr>
						<tr><td class="leaf last">单梁装修</td><td><input type="checkbox" aria-label="单梁装修 图元"></td><td><input type="checkbox" aria-label="单梁装修 名称"></td></tr>
						<tr><td class="node"><button class="fold" aria-label="折叠">−</button>基坑支护</td><td><input type="checkbox" class="part" aria-label="基坑支护 图元"></td><td><input type="checkbox" aria-label="基坑支护 名称"></td></tr>
						<tr><td class="leaf">支护桩</td><td class="edit"><input type="checkbox" checked aria-label="支护桩 图元"></td><td><input type="checkbox" aria-label="支护桩 名称"></td></tr>
						<tr><td class="leaf">支撑梁</td><td><input type="checkbox" aria-label="支撑梁 图元"></td><td><input type="checkbox" aria-label="支撑梁 名称"></td></tr>
						<tr><td class="leaf">格构柱</td><td><input type="checkbox" aria-label="格构柱 图元"></td><td><input type="checkbox" aria-label="格构柱 名称"></td></tr>
						<tr><td class="leaf">钢桩</td><td><input type="checkbox" aria-label="钢桩 图元"></td><td><input type="checkbox" aria-label="钢桩 名称"></td></tr>
						<tr><td class="leaf">桩间挂网</td><td><input type="checkbox" aria-label="桩间挂网 图元"></td><td><input type="checkbox" aria-label="桩间挂网 名称"></td></tr>
						<tr><td class="leaf">土钉墙</td><td><input type="checkbox" aria-label="土钉墙 图元"></td><td><input type="checkbox" aria-label="土钉墙 名称"></td></tr>
						<tr><td class="leaf last">斜支撑</td><td><input type="checkbox" aria-label="斜支撑 图元"></td><td><input type="checkbox" aria-label="斜支撑 名称"></td></tr>
					</tbody>
				</table>
				<div class="scroll"><i></i></div>
			</div>
			<div class="foot"><button>恢复默认设置</button></div>
			<svg class="meter" viewBox="0 0 9 52"><rect width="18" height="52" rx="3" fill="#404040"/><path d="M5 7h4M5 10h4M5 13h4M5 16h4M5 19h4M5 30h4M5 33h4M5 36h4M5 39h4M5 42h4" stroke="#777"/><path d="M5 23h4" stroke="#ff9a20"/><path d="M5 46h4" stroke="#8ae020"/></svg>
		</aside>
	</main>

	<footer class="status">
		<dl>
			<div><dt>层高：</dt><dd>1</dd></div>
			<div><dt>标高：</dt><dd>-6.7~-5.7</dd></div>
			<div><dt>选中图元：</dt><dd>1(144)</dd></div>
			<div><dt>隐藏图元：</dt><dd>0</dd></div>
		</dl>
		<div class="modes">
			<button aria-label="正交"><svg class="ic" viewBox="0 0 20 20"><path d="M3 1v16h16M3 12h5v5"/></svg></button>
			<button class="wide on" aria-label="矩形捕捉"><svg class="ic" viewBox="0 0 20 20"><rect x="2" y="2" width="16" height="16" rx="2"/><circle class="b" cx="3" cy="2" r="2"/></svg><i class="tri"></i></button>
			<button class="off" aria-label="交点"><svg class="ic" viewBox="0 0 20 20"><path d="M1 1l18 18M19 1L1 19M8 8h4v4H8z"/></svg></button>
			<button class="wide" aria-label="角度"><svg class="ic" viewBox="0 0 20 20"><path d="M17 2L2 17h17M9 9c3 2 3 5 3 8"/></svg><i class="tri"></i></button>
			<button class="wide" aria-label="偏移"><svg class="ic" viewBox="0 0 20 20"><path d="M5 1v8M1 5h8"/><rect class="dark" x="8" y="13" width="12" height="4"/></svg><i class="tri"></i></button>
			<button aria-label="选择方式"><svg class="ic" viewBox="0 0 20 20"><rect class="dark" x="3" y="3" width="10" height="10"/><path d="M1 1h14v14H1zM15 4h4v9"/><path class="dark" d="M12 11l7 5-4 0-2 3z"/></svg></button>
			<button aria-label="折线"><svg class="ic" viewBox="0 0 20 20"><path d="M1 18C2 10 4 6 7 5l12-3"/><path class="dark" d="M13 9l5 4-5 4z"/></svg></button>
		</div>
	</footer>
</body>
</html>
```
FILE: styles.css
```
* {
	box-sizing: border-box;
}
body, h2, ul, dl, dd {
	margin: 0;
	padding: 0;
}
body {
	height: 100vh;
	display: flex;
	flex-direction: column;
	overflow: hidden;
	background: #fff;
	color: #333;
	font: 15px/20px "Noto Sans", "Noto Sans CJK SC", sans-serif;
}
ul {
	list-style: none;
}
a {
	color: inherit;
	text-decoration: none;
}
button, input, select {
	margin: 0;
	padding: 0;
	border: 0;
	background: none;
	color: inherit;
	font: inherit;
}
button {
	display: flex;
	align-items: center;
	white-space: nowrap;
}
.sprite {
	display: none;
}

/* icons */
.ic {
	width: 20px;
	height: 20px;
	flex: none;
	fill: none;
	stroke: #4b5566;
	stroke-width: 1.3;
}
.ic.small {
	width: 14px;
	height: 14px;
	stroke-width: 2;
}
.b { stroke: #1f7ef0; }
.b2 { stroke: #1f7ef0; stroke-width: 1.8; }
.b3 { stroke: #1f7ef0; stroke-width: 3; }
.d2 { stroke: #4b5566; stroke-width: 2.4; }
.bf { stroke: #1f7ef0; fill: #d3e6fc; }
.lf { fill: #c2dbf8; }
.g { stroke: #b4b4b4; }
.r { stroke: #e02020; }
.solid { fill: #1f7ef0; stroke: none; }
.dark { fill: #4b5566; }
.tiny { font: bold 6px "Liberation Sans", sans-serif; fill: #1f7ef0; stroke: none; }
.t3d { font: bold 10px "Liberation Sans", sans-serif; fill: #1f7ef0; stroke: none; }
.tri {
	display: inline-block;
	flex: none;
	border: 4px solid transparent;
	border-top: 5px solid #666;
	border-bottom: 0;
}
.tri.dim {
	border-top-color: #b4b4b4;
}
.tri.bar {
	position: relative;
}
.tri.bar::before {
	content: "";
	position: absolute;
	left: -4px;
	top: -9px;
	width: 8px;
	height: 2px;
	background: #666;
}

/* title and menu */
.top {
	display: flex;
	border-bottom: 1px solid #ececec;
}
.logo {
	flex: 0 0 61px;
}
.logo svg {
	display: block;
	width: 60px;
	height: 50px;
}
.top-main {
	flex: 1;
	min-width: 0;
}
.titlebar {
	display: flex;
	height: 26px;
	align-items: center;
}
.quick {
	display: flex;
}
.quick button {
	width: 33px;
	height: 24px;
	justify-content: center;
}
.quick .drop {
	width: 10px;
}
.title {
	flex: 1;
	padding-left: 50px;
	white-space: nowrap;
	overflow: hidden;
}
.win {
	display: flex;
	gap: 26px;
	padding-right: 5px;
}
.menubar {
	display: flex;
	justify-content: space-between;
	align-items: flex-start;
	height: 24px;
}
.menu {
	display: flex;
	padding-left: 2px;
}
.menu a {
	padding: 0 16px;
	line-height: 24px;
	border-radius: 12px;
}
.menu .on {
	background: #1f8fff;
	color: #fff;
}
.help {
	display: flex;
	align-items: center;
	gap: 9px;
	height: 24px;
	margin-right: -4px;
}
.ask {
	display: flex;
	align-items: center;
	width: 402px;
	height: 21px;
	border: 1px solid #e8e8e8;
	border-radius: 3px;
	color: #000;
}
.ask input {
	flex: 1;
	min-width: 0;
}
.ask .ic {
	margin: 0 9px;
}
.avatar {
	width: 20px;
	height: 20px;
}
.user {
	margin: 0 10px 0 -8px;
}
.q {
	font-size: 20px;
	width: 20px;
}
.dot {
	width: 3px;
	height: 3px;
	margin-left: 2px;
	background: #555;
}

/* ribbon */
.ribbon {
	display: flex;
	height: 123px;
	padding: 3px 0 5px;
	border-bottom: 1px solid #dcdcdc;
}
.group {
	display: flex;
	flex-direction: column;
	justify-content: space-between;
	padding: 0 18px 0 10px;
	border-right: 1px solid #dedede;
}
.tools {
	display: flex;
	gap: 6px;
}
.cols {
	display: grid;
	grid-template-rows: repeat(3, 29px);
	grid-auto-flow: column;
	column-gap: 14px;
}
.cols button {
	gap: 4px;
}
.cols .tri {
	margin-left: 2px;
}
.cols button:disabled {
	color: #b4b4b4;
}
.name {
	text-align: center;
	line-height: 20px;
}
.name .tri {
	margin-left: 12px;
	vertical-align: middle;
}
.big {
	flex-direction: column;
	justify-content: space-between;
	width: 50px;
	height: 83px;
	margin-top: 4px;
	padding: 4px 0 18px;
}
.big.on {
	background: #c2daf2;
	border-radius: 3px;
}
.arrow {
	width: 26px;
	height: 32px;
	fill: none;
	stroke: #1f7ef0;
	stroke-width: 2;
}
.g-select .cols {
	column-gap: 10px;
}
.g-common {
	padding-right: 16px;
}
.g-common .cols {
	column-gap: 12px;
}
.g-draw .cols {
	grid-template-columns: 40px 20px;
	column-gap: 0;
}
.g-draw {
	padding: 0 10px 0 10px;
}
.g-smart .big {
	width: 62px;
	padding: 0 0 2px;
}
.g-smart {
	padding: 0 25px 0 9px;
}
.g-smart .name, .g-second .name {
	white-space: nowrap;
}
.smart {
	width: 38px;
	height: 38px;
}
.g-second {
	padding-right: 16px;
	min-width: 142px;
}

/* floor / component selects */
.combos {
	display: flex;
	gap: 5px;
	height: 33px;
	padding: 3px;
	background: #f1f1f1;
}
.combo {
	display: flex;
	align-items: center;
	width: 123px;
	height: 27px;
	padding-right: 6px;
	background: #fff;
	border: 1px solid #e2e2e2;
	border-radius: 4px;
}
.combo select {
	appearance: none;
	flex: 1;
	padding-left: 3px;
}
.combo::after {
	content: "";
	border: 3px solid transparent;
	border-top: 5px solid #444;
	border-bottom: 0;
}

/* work area */
.work {
	flex: 1;
	min-height: 0;
	display: grid;
	grid-template-columns: 163px 350px minmax(0, auto) minmax(0, 1fr) minmax(0, auto) 341px;
	grid-template-rows: minmax(0, 1fr);
}
.panel {
	display: flex;
	flex-direction: column;
	min-height: 0;
	border: 1px solid #d4d4d4;
	background: #fff;
}
.strip {
	flex: none;
	height: 14px;
	background: #e6e6e6;
	border-bottom: 1px solid #dadada;
	display: flex;
	justify-content: flex-end;
}
.strip button {
	width: 18px;
	justify-content: center;
}
.strip button::before {
	content: "×";
	color: #888;
	font-size: 18px;
	line-height: 14px;
}
.panel h2 {
	flex: none;
	height: 28px;
	padding-left: 10px;
	font-size: 15px;
	line-height: 26px;
	font-weight: normal;
	color: #777;
	background: #f0f0f0;
	border-bottom: 1px solid #dcdcdc;
}
.navtools {
	flex: none;
	display: flex;
	height: 35px;
	padding: 3px 2px;
	gap: 5px;
	border-bottom: 1px solid #d4d4d4;
}
.navtools button {
	width: 30px;
	height: 27px;
	justify-content: center;
	border-radius: 3px;
}
.navtools .on {
	background: #c2daf2;
}
.navbody {
	flex: 1;
	min-height: 0;
	display: flex;
	justify-content: space-between;
}
.navbody ul {
	width: 143px;
	display: grid;
	grid-auto-rows: 31px;
	gap: 4px;
	padding-top: 5px;
	overflow: hidden;
}
.navbody li {
	line-height: 31px;
	white-space: nowrap;
	overflow: hidden;
}
.navbody a {
	display: flex;
	align-items: center;
	gap: 17px;
	padding-left: 20px;
}
.navbody .ic {
	width: 24px;
	height: 24px;
}
.navbody .cat {
	padding-left: 4px;
	background: #ebebeb;
}
.navbody li.on {
	background: #d4e7fd;
}
.scroll {
	display: flex;
	flex-direction: column;
	width: 14px;
}
.scroll i {
	width: 10px;
	border-radius: 5px;
	background: #cbcbcb;
}
.nav .scroll i {
	height: 290px;
	margin: auto 0 18px;
}
.middle {
	display: grid;
	grid-template-rows: 293px minmax(0, 1fr);
	gap: 5px;
	padding-left: 5px;
	margin-right: -5px;
}
.tabs {
	flex: none;
	display: flex;
	height: 29px;
	background: #f1f1f1;
	border-bottom: 1px solid #d4d4d4;
}
.tabs button {
	width: 81px;
	justify-content: center;
	border: 1px solid #c6c6c6;
	border-width: 1px 1px 0 0;
	color: #888;
	background: #dfdfdf;
}
.tabs .on {
	background: #f4f4f4;
	color: #222;
	font-weight: bold;
}
.listtools {
	flex: none;
	display: flex;
	justify-content: space-between;
	height: 34px;
	padding: 0 2px 0 4px;
	border-bottom: 1px solid #e4e4e4;
}
.listtools button {
	gap: 5px;
}
.more svg {
	width: 10px;
}
.search {
	flex: none;
	display: flex;
	align-items: center;
	height: 24px;
	padding: 0 9px 0 2px;
	border-bottom: 1px solid #e4e4e4;
}
.search input {
	flex: 1;
	min-width: 0;
}
.search input::placeholder {
	color: #999;
}
.tree {
	padding: 9px 0 0 17px;
}
.tree .tri {
	margin-right: 5px;
	vertical-align: middle;
}
.tree ul {
	padding: 7px 0 0 33px;
}
.tree a {
	display: inline-block;
	padding: 3px 5px;
	border-radius: 3px;
	background: #c2daf2;
}

/* tables */
table {
	width: 100%;
	table-layout: fixed;
	border-collapse: collapse;
}
th {
	font-weight: normal;
}
thead tr {
	height: 25px;
}
td, th {
	padding: 0 4px;
	border: 1px solid #dcdcdc;
	white-space: nowrap;
	overflow: hidden;
}
.propbody {
	flex: 1;
	min-height: 0;
	padding-right: 4px;
	background: linear-gradient(90deg, #ededed 27px, #fff 27px);
}
.proptable {
	height: 394px;
}
.c-no {
	width: 27px;
}
.c-key {
	width: 126px;
}
.proptable tbody th {
	padding: 0;
	background: #ededed;
}
.proptable .blank {
	background: #fff;
}
table .hl, .proptable tbody .hl {
	background: #80bbfa;
	color: #fff;
	font-weight: bold;
}
.key {
	color: #2962f0;
}
.edit {
	outline: 2px solid #808080;
	outline-offset: -1px;
}
.proptable input {
	display: block;
	width: 100%;
	height: 20px;
}
.fold {
	display: inline-flex;
	justify-content: center;
	width: 16px;
	height: 16px;
	margin-right: 7px;
	border: 1px solid #888;
	border-radius: 3px;
	line-height: 12px;
	vertical-align: middle;
}

/* drawing area */
.split {
	display: flex;
	align-items: center;
	width: 5px;
	justify-content: center;
}
.split i {
	width: 5px;
	height: 125px;
	background: #606a78;
}
.canvas {
	position: relative;
	overflow: hidden;
}
.middle + .split {
	margin-left: 4px;
}
.cad {
	display: block;
	width: 100%;
	height: 100%;
}
.cadtext {
	font: 300 18px Roboto, "Liberation Sans", sans-serif;
}
.large {
	font-size: 24px;
}
.teal { fill: #009292; }
.yellow { fill: #d8d800; }
.pink { fill: #dc7070; }
.dim { fill: #b0b0b0; }
.axis {
	font: 22px "Open Sans", sans-serif;
	fill: #fff;
}
.mid, .ucs {
	text-anchor: middle;
}
.ucs {
	font: 20px "Liberation Sans", sans-serif;
}
.viewbar {
	position: absolute;
	top: 1px;
	right: 1px;
	width: 40px;
	height: 306px;
	padding: 16px 0;
	display: flex;
	flex-direction: column;
	align-items: center;
	justify-content: space-between;
	background: #fff;
	border-radius: 4px;
}
.viewbar .ic {
	width: 26px;
	height: 26px;
}
.viewbar hr {
	width: 28px;
	margin: 0;
	border: 0;
	border-top: 1px solid #666;
}
.tip {
	position: absolute;
	left: 346px;
	bottom: 40px;
	width: 347px;
	height: 36px;
	display: flex;
	align-items: center;
	justify-content: space-between;
	padding: 0 24px 0 9px;
	color: #fff;
	background: #008cff;
	border-radius: 3px;
}
.tip::after {
	content: "";
	position: absolute;
	left: 18px;
	top: 36px;
	border: 7px solid transparent;
	border-top-color: #008cff;
	border-bottom: 0;
}
.tip button {
	color: #8cc8ff;
}
.prompt {
	position: absolute;
	left: 0;
	right: 0;
	bottom: 0;
	height: 33px;
	display: flex;
	align-items: center;
	justify-content: center;
	gap: 4px;
	background: rgba(61, 61, 61, .7);
	color: #fff;
	font-weight: 500;
}
.prompt svg {
	width: 20px;
	height: 20px;
	fill: none;
	stroke: #fff;
	stroke-width: 1.4;
}

/* display settings */
.display {
	position: relative;
	border-right: 0;
	overflow: hidden;
}
.display .strip button {
	margin-right: -7px;
}
.pills {
	flex: none;
	display: flex;
	align-items: flex-end;
	gap: 5px;
	height: 34px;
	padding-left: 3px;
	border-bottom: 1px solid #cfcfcf;
}
.pills button {
	width: 75px;
	height: 27px;
	justify-content: center;
	background: #dedede;
	border-radius: 4px 4px 0 0;
}
.pills .on {
	height: 29px;
	color: #1f7ef0;
	background: #fff;
	border: 1px solid #b9c2ce;
	border-bottom: 0;
}
.layers {
	flex: 1;
	min-height: 0;
	display: flex;
	padding: 3px 0 0 3px;
	border-bottom: 1px solid #dcdcdc;
	overflow: hidden;
}
.layers table {
	flex: 1;
	height: 100%;
}
.c-chk {
	width: 79px;
}
.layers td {
	text-align: center;
}
.layers td.leaf, .layers td.node {
	text-align: left;
	background: linear-gradient(#ddd, #ddd) 11px 0 / 1px 100% no-repeat,
		linear-gradient(#ddd, #ddd) 23px 0 / 1px 100% no-repeat,
		linear-gradient(#ddd, #ddd) 23px 50% / 21px 1px no-repeat;
}
.layers td.leaf {
	padding-left: 52px;
}
.layers td.leaf.last {
	background-size: 1px 100%, 1px 50%, 21px 1px;
}
.layers td.node {
	padding-left: 15px;
	background: linear-gradient(#ddd, #ddd) 11px 0 / 1px 100% no-repeat;
}
.layers .fold {
	background: #fff;
}
input[type="checkbox"] {
	appearance: none;
	display: block;
	width: 17px;
	height: 17px;
	margin: 0 auto;
	border: 1px solid #808080;
	border-radius: 3px;
	background: #fff;
}
input[type="checkbox"].part {
	background: #9ccbff;
	box-shadow: inset 0 0 0 1px #fff, inset 0 0 0 2px #4c9df8;
}
input[type="checkbox"]:checked {
	background: #2a7de1;
	border-color: #2a7de1;
}
input[type="checkbox"]:checked::before {
	content: "";
	display: block;
	width: 5px;
	height: 10px;
	margin: 0 auto;
	border: solid #fff;
	border-width: 0 2px 2px 0;
	transform: rotate(40deg);
}
.display .scroll {
	align-items: flex-end;
}
.display .scroll i {
	height: 108px;
	margin-top: 304px;
	border-radius: 5px 0 0 5px;
}
.foot {
	flex: none;
	display: flex;
	justify-content: flex-end;
	height: 48px;
	padding: 8px 3px;
}
.foot button {
	width: 112px;
	height: 32px;
	justify-content: center;
	border: 1px solid #cfcfcf;
	border-radius: 4px;
}
.meter {
	position: absolute;
	right: 0;
	top: 308px;
	width: 9px;
	height: 52px;
}

/* status bar */
.status {
	flex: none;
	display: flex;
	height: 34px;
	background: #fbfbfb;
}
.status dl {
	display: grid;
	grid-template-columns: 113px 175px 137px auto;
	align-items: center;
	width: 512px;
	padding: 4px 0 0 2px;
	white-space: nowrap;
}
.status dl div {
	display: flex;
	gap: 4px;
}
.modes {
	display: flex;
	gap: 4px;
	padding: 4px 0 0 53px;
}
.modes button {
	width: 31px;
	height: 30px;
	justify-content: center;
	gap: 7px;
	border: 1px solid #999;
	border-radius: 3px;
}
.modes .wide {
	width: 45px;
}
.modes .on {
	background: #d6e6fa;
	border-color: #3c8df0;
}
.modes .off {
	opacity: .7;
	margin: 0 3px;
}
```
